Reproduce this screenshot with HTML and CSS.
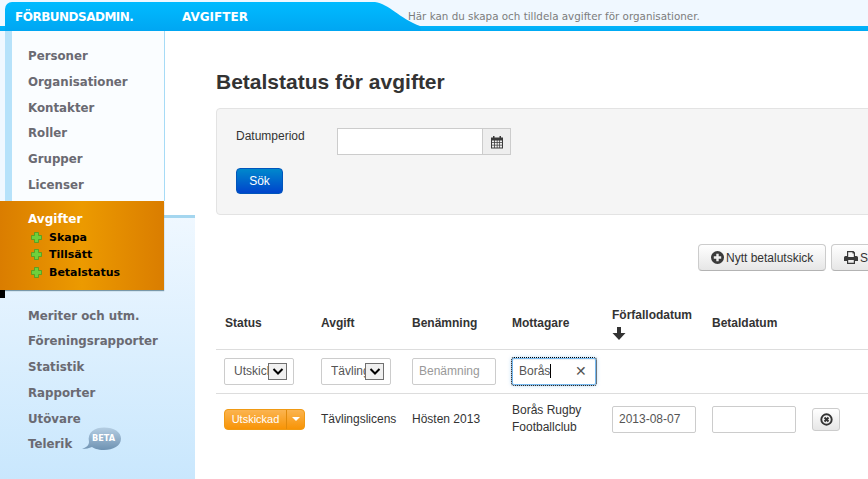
FILE: index.html
```html
<!DOCTYPE html>
<html lang="sv">
<head>
<meta charset="utf-8">
<title>Betalstatus för avgifter</title>
<link rel="stylesheet" href="styles.css">
</head>
<body>
<header class="top">
  <div class="tab">
    <span class="brand">FÖRBUNDSADMIN.</span>
    <span class="section">AVGIFTER</span>
  </div>
  <svg class="tab-curve" width="46" height="29" viewBox="0 0 46 29"><defs><linearGradient id="tc" x1="0" y1="0" x2="0" y2="1"><stop offset="0" stop-color="#00bbff"/><stop offset="1" stop-color="#00a6f2"/></linearGradient></defs><path d="M0 0C14 2 24 16 45 24L46 29H0Z" fill="url(#tc)"/></svg>
  <p class="intro">Här kan du skapa och tilldela avgifter för organisationer.</p>
</header>
<div class="page">
  <aside class="sidebar">
    <nav class="panel">
      <a class="nav-item">Personer</a>
      <a class="nav-item">Organisationer</a>
      <a class="nav-item">Kontakter</a>
      <a class="nav-item">Roller</a>
      <a class="nav-item">Grupper</a>
      <a class="nav-item">Licenser</a>
    </nav>
    <div class="active">
      <div class="active-title">Avgifter</div>
      <a class="sub"><svg class="plus" width="11" height="11" viewBox="0 0 11 11"><path d="M3.500.5h4v3h3v4h-3v3h-4v-3h-3v-4h3z" fill="#6fd03c" stroke="#3d9b26" stroke-width=".7"/></svg>Skapa</a>
      <a class="sub"><svg class="plus" width="11" height="11" viewBox="0 0 11 11"><path d="M3.500.5h4v3h3v4h-3v3h-4v-3h-3v-4h3z" fill="#6fd03c" stroke="#3d9b26" stroke-width=".7"/></svg>Tillsätt</a>
      <a class="sub"><svg class="plus" width="11" height="11" viewBox="0 0 11 11"><path d="M3.500.5h4v3h3v4h-3v3h-4v-3h-3v-4h3z" fill="#6fd03c" stroke="#3d9b26" stroke-width=".7"/></svg>Betalstatus</a>
    </div>
    <nav class="lower">
      <a class="nav-item">Meriter och utm.</a>
      <a class="nav-item">Föreningsrapporter</a>
      <a class="nav-item">Statistik</a>
      <a class="nav-item">Rapporter</a>
      <a class="nav-item">Utövare</a>
      <a class="nav-item nav-beta">Telerik
        <svg class="beta" width="40" height="24" viewBox="0 0 40 24"><defs><linearGradient id="bb" x1="0" y1="0" x2="0" y2="1"><stop offset="0" stop-color="#b4cde2"/><stop offset="1" stop-color="#6e92b2"/></linearGradient></defs><path d="M0 22C5 20 7 18 7 15C5 5 13 .5 22 .5C32 .5 39 5 39 11.500C39 19 31 23 22 23C15 23 12 21 10 20C7 21 4 22 0 22Z" fill="url(#bb)"/><text x="10" y="14" class="beta-text">BETA</text></svg>
      </a>
    </nav>
  </aside>
  <main class="main">
    <h1 class="title">Betalstatus för avgifter</h1>
    <section class="well">
      <div class="well-row">
        <label class="well-label">Datumperiod</label>
        <div class="date-group">
          <div class="date-input"></div>
          <div class="date-addon">
            <svg width="14" height="14" viewBox="0 0 14 14"><path d="M1 2.500h2V1h1.500v1.500h5V1H11v1.500h2V13.500H1Z" fill="#3a3a3a"/><path d="M2 5.500h2.200v1.800H2zM5 5.500h1.800v1.800H5zM7.500 5.500h1.800v1.800H7.500zM10 5.500h2v1.800h-2zM2 8h2.200v1.800H2zM5 8h1.800v1.800H5zM7.500 8h1.800v1.800H7.500zM10 8h2v1.800h-2zM2 10.500h2.200v2H2zM5 10.500h1.800v2H5zM7.500 10.500h1.800v2H7.500zM10 10.500h2v2h-2z" fill="#eee"/></svg>
          </div>
        </div>
      </div>
      <button class="btn-primary">Sök</button>
    </section>
    <div class="actions">
      <button class="btn">
        <svg width="13" height="13" viewBox="0 0 13 13"><circle cx="6.500" cy="6.500" r="6.500" fill="#3a3a3a"/><path d="M5.300 2.800h2.400v2.500h2.500v2.400H7.700v2.500H5.300V7.700H2.800V5.300h2.500z" fill="#eee"/></svg>
        Nytt betalutskick
      </button>
      <button class="btn">
        <svg width="14" height="13" viewBox="0 0 14 13"><path d="M3 0h6.500L11 1.500V5h1.500Q14 5 14 6.500V10h-3v3H3v-3H0V6.500Q0 5 1.500 5H3ZM4.200 1.200V6h5.600V2.500H8.500V1.200ZM4.200 9v2.800h5.600V9Z" fill="#3a3a3a" fill-rule="evenodd"/></svg>
        Skriv ut
      </button>
    </div>
    <table class="grid">
      <colgroup><col class="c1"><col class="c2"><col class="c3"><col class="c4"><col class="c5"><col class="c6"><col class="c7"></colgroup>
      <thead>
        <tr class="head">
          <th>Status</th>
          <th>Avgift</th>
          <th>Benämning</th>
          <th>Mottagare</th>
          <th>Förfallodatum
            <svg class="sort" width="14" height="13" viewBox="0 0 14 13"><path d="M5 0h4v6h4.500L7 13 .5 6H5z" fill="#333"/></svg>
          </th>
          <th>Betaldatum</th>
          <th></th>
        </tr>
      </thead>
      <tbody>
        <tr class="filter">
          <td><div class="field select"><span class="select-text">Utskickad</span><span class="select-arrow"><svg width="12" height="7" viewBox="0 0 12 7"><path d="M1.500 1 6 5.500 10.500 1" fill="none" stroke="#000" stroke-width="2"/></svg></span></div></td>
          <td><div class="field select"><span class="select-text">Tävlingslicens</span><span class="select-arrow"><svg width="12" height="7" viewBox="0 0 12 7"><path d="M1.500 1 6 5.500 10.500 1" fill="none" stroke="#000" stroke-width="2"/></svg></span></div></td>
          <td><div class="field text placeholder">Benämning</div></td>
          <td><div class="field text focus"><span class="typed">Borås</span><span class="clear">✕</span></div></td>
          <td></td><td></td><td></td>
        </tr>
        <tr class="data">
          <td>
            <div class="split"><span class="split-main">Utskickad</span><span class="split-caret"></span></div>
          </td>
          <td>Tävlingslicens</td>
          <td>Hösten 2013</td>
          <td class="wrap">Borås Rugby Footballclub</td>
          <td><div class="field text">2013-08-07</div></td>
          <td><div class="field text"></div></td>
          <td><button class="btn-icon"><svg width="13" height="13" viewBox="0 0 13 13"><circle cx="6.500" cy="6.500" r="5.200" fill="none" stroke="#333" stroke-width="1.900"/><path d="M4.500 4.500l4 4M8.500 4.500l-4 4" stroke="#333" stroke-width="2"/></svg></button></td>
        </tr>
      </tbody>
    </table>
  </main>
</div>
</body>
</html>
```

FILE: styles.css
```css
* { box-sizing: border-box; }
html, body { margin: 0; height: 100%; overflow: hidden; }
body {
  width: 868px;
  height: 479px;
  background: #fff;
  font-family: "Liberation Sans", Arial, sans-serif;
  font-size: 12px;
  color: #333;
}

/* Header */
.top {
  display: flex;
  height: 31px;
  padding-left: 5px;
  background: linear-gradient(to bottom, #f0f8ff 0, #f0f8ff 26px, #00b4fb 26px, #00aaf4 31px);
}
.tab {
  display: flex;
  align-items: center;
  width: 370px;
  height: 29px;
  margin-top: 2px;
  padding: 1px 0 0 10px;
  border-radius: 7px 0 0 0;
  background: linear-gradient(to bottom, #00bbff, #00a6f2);
  color: #fff;
  font-family: "DejaVu Sans", Verdana, sans-serif;
  font-weight: bold;
  font-size: 12px;
}
.brand { width: 167px; letter-spacing: -.5px; }
.tab-curve { margin-top: 2px; flex: none; }
.intro {
  margin: 10px 0 0 -13px;
  font-family: "DejaVu Sans", Verdana, sans-serif;
  font-size: 10.350px;
  line-height: 12px;
  color: #7c7c7c;
  white-space: nowrap;
}

/* Sidebar */
.page { display: flex; height: 448px; }
.sidebar {
  position: relative;
  flex: none;
  width: 195px;
  background: linear-gradient(to bottom, #f0f8ff 0, #f0f8ff 180px, #c9e7fd 100%);
}
.sidebar::before {
  content: "";
  position: absolute;
  left: 160px;
  top: 0;
  width: 35px;
  height: 184px;
  background: #fff;
  border-bottom: 3px solid #a4d6ef;
}
.panel {
  position: relative;
  width: 160px;
  height: 170px;
  margin-left: 5px;
  padding: 13px 0 0 16px;
  border-left: 7px solid #b6e2fa;
  border-right: 1px solid #a6dbf6;
  background: #fafdff;
}
.nav-item {
  display: block;
  height: 25.800px;
  font-family: "DejaVu Sans", Verdana, sans-serif;
  font-size: 11.800px;
  font-weight: bold;
  line-height: 25.800px;
  color: #6a6a72;
  white-space: nowrap;
}
.active {
  position: relative;
  width: 164px;
  height: 89px;
  padding: 9px 0 0 28px;
  background: linear-gradient(to right, #da7d00, #ec9a00 50%, #da7d00);
  box-shadow: 0 1px 1px #7a98a8;
  font-family: "DejaVu Sans", Verdana, sans-serif;
  font-weight: bold;
}
.active::after {
  content: "";
  position: absolute;
  left: 0;
  top: 89px;
  width: 5px;
  height: 8px;
  background: #000;
}
.active-title { height: 18.500px; font-size: 12px; line-height: 18px; color: #fff; }
.sub {
  display: flex;
  align-items: center;
  height: 17.500px;
  margin-left: 3px;
  font-size: 11px;
  color: #000;
}
.plus { margin-right: 7px; flex: none; }
.lower { padding: 13.500px 0 0 28px; }
.nav-beta { display: flex; align-items: center; position: relative; }
.beta { margin: -12px 0 0 10px; }
.beta-text { font-family: "DejaVu Sans", sans-serif; font-size: 8.200px; font-weight: bold; fill: #fff; }

/* Main */
.main { flex: none; width: 673px; padding-left: 21px; }
.title {
  margin: 0;
  padding-top: 37px;
  height: 77px;
  font-size: 21px;
  line-height: 27px;
  font-weight: bold;
  color: #333;
  white-space: nowrap;
}
.well {
  width: 700px;
  height: 107px;
  padding: 19px 19px;
  background: #f5f5f5;
  border: 1px solid #e3e3e3;
  border-radius: 4px;
}
.well-row { display: flex; height: 40px; }
.well-label { width: 101px; padding-top: 1px; line-height: 15px; }
.date-group { display: flex; height: 27px; }
.date-input { width: 146px; background: #fff; border: 1px solid #ccc; }
.date-addon {
  display: flex;
  align-items: center;
  justify-content: center;
  width: 28px;
  background: #eee;
  border: 1px solid #ccc;
  border-left: 0;
}
.btn-primary {
  display: block;
  width: 47px;
  height: 26px;
  padding: 0;
  color: #fff;
  font: 12px "Liberation Sans", Arial, sans-serif;
  background: linear-gradient(to bottom, #0088cc, #0044cc);
  border: 1px solid #0055bb;
  border-radius: 4px;
}
.actions { display: flex; gap: 5px; margin: 29px 0 0 482px; height: 27px; width: 400px; }
.btn {
  display: flex;
  align-items: center;
  justify-content: flex-start;
  gap: 2px;
  flex: none;
  width: 128px;
  height: 27px;
  padding: 0 0 0 12px;
  color: #333;
  font: 12px "Liberation Sans", Arial, sans-serif;
  background: linear-gradient(to bottom, #fff, #e6e6e6);
  border: 1px solid #ccc;
  border-bottom-color: #b3b3b3;
  border-radius: 4px;
}

/* Table */
.grid {
  table-layout: fixed;
  width: 700px;
  margin-top: 29px;
  border-collapse: collapse;
}
.c1 { width: 96px; } .c2 { width: 91px; } .c3, .c4, .c5, .c6 { width: 100px; } .c7 { width: 113px; }
.grid th, .grid td { padding: 0 8px 0 9px; vertical-align: middle; text-align: left; }
.grid th { font-size: 12px; font-weight: bold; line-height: 17px; height: 49px; padding-top: 0; }
.head th { padding-top: 0; vertical-align: bottom; padding-bottom: 17px; }
.head th:nth-child(5) { padding-bottom: 9px; }
.sort { display: block; margin-top: 3px; }
.head { border-bottom: 1px solid #ddd; }
.filter { height: 44px; border-bottom: 1px solid #ddd; }
.data { height: 52px; line-height: 17px; }
.wrap { white-space: normal; }
.filter td:nth-child(1), .data td:nth-child(1) { padding-left: 8px; }
.field {
  height: 27px;
  background: #fff;
  border: 1px solid #ccc;
  border-radius: 2px;
  line-height: 25px;
  color: #555;
  white-space: nowrap;
  overflow: hidden;
}
.select { position: relative; width: 70px; padding-left: 9px; }
.select-text { display: block; width: 34px; overflow: hidden; }
.select-arrow {
  position: absolute;
  top: 4px;
  right: 6px;
  display: flex;
  align-items: center;
  justify-content: center;
  width: 19px;
  height: 17px;
  background: #f0f0f0;
  border: 1px solid #707070;
}
.text { width: 84px; padding-left: 6px; }
.placeholder { color: #999; }
.focus {
  position: relative;
  outline: 1px dotted #000;
  outline-offset: 0;
  border-color: rgba(82,168,236,.8);
  box-shadow: inset 0 1px 1px rgba(0,0,0,.075), 0 0 4px rgba(82,168,236,.6);
}
.typed { border-right: 1px solid #000; padding-right: 0; }
.clear { position: absolute; right: 8px; top: 0; font-size: 14px; color: #555; }
.split { display: flex; width: 81px; height: 21px; border-radius: 4px; overflow: hidden; border: 1px solid #f09a14; color: #fff; font-size: 11px; background: linear-gradient(to bottom, #fbb450, #f89406); }
.split-main { width: 62px; line-height: 19px; text-align: center; border-right: 1px solid #e08a0c; }
.split-caret { position: relative; flex: 1; }
.split-caret::after {
  content: "";
  position: absolute;
  left: 5px;
  top: 7px;
  border-left: 4px solid transparent;
  border-right: 4px solid transparent;
  border-top: 4px solid #fff;
}
.btn-icon {
  display: flex;
  align-items: center;
  justify-content: center;
  width: 28px;
  height: 23px;
  padding: 0;
  background: linear-gradient(to bottom, #fff, #e6e6e6);
  border: 1px solid #ccc;
  border-radius: 3px;
}
```
